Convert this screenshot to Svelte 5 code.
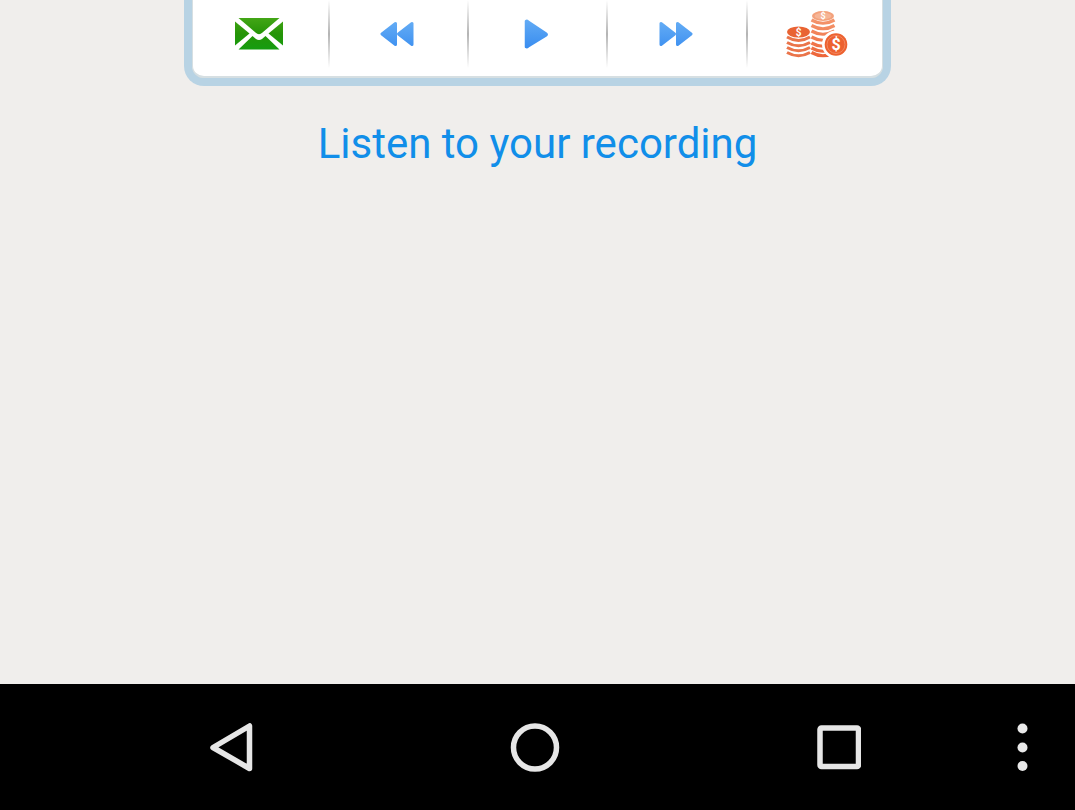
<script>
  let playing = $state(false);
</script>

<svelte:head><title>Listen to your recording</title></svelte:head>

<div class="screen">
  <main>
    <div class="panel" role="toolbar" aria-label="Recording controls">
      <div class="controls">
        <button aria-label="Send by mail">
          <svg width="50" height="34" viewBox="0 0 50 34">
            <defs>
              <linearGradient id="mail" x1="0" y1="1" x2="0" y2="33" gradientUnits="userSpaceOnUse">
                <stop offset="0" stop-color="#43a616" />
                <stop offset="0.5" stop-color="#259407" />
                <stop offset="1" stop-color="#149d10" />
              </linearGradient>
            </defs>
            <g fill="url(#mail)">
              <path d="M4.500 1H45.500L28.500 15.500Q25 19 21.500 15.500Z" />
              <path d="M1 4.500L15.500 16.500L1 28.500Z" />
              <path d="M49 4.500L34.500 16.500L49 28.500Z" />
              <path d="M4.500 32.500L18.500 19L22 22Q25 24 28 22L31.500 19L45.500 32.500Z" />
            </g>
          </svg>
        </button>
        <button aria-label="Rewind">
          <svg width="34" height="26" viewBox="0 0 34 26">
            <defs>
              <linearGradient id="blue" x1="0" y1="0" x2="0" y2="30" gradientUnits="userSpaceOnUse">
                <stop offset="0" stop-color="#65adf5" />
                <stop offset="1" stop-color="#398df0" />
              </linearGradient>
            </defs>
            <g fill="url(#blue)" stroke="url(#blue)" stroke-width="3" stroke-linejoin="round">
              <path d="M15.500 2.500V23.500L2 13Z" />
              <path d="M32 2.500V23.500L18.500 13Z" />
            </g>
          </svg>
        </button>
        <button aria-label={playing ? 'Pause' : 'Play'} onclick={() => (playing = !playing)}>
          <svg width="26" height="32" viewBox="0 0 26 32">
            <path
              d="M3 3V29Q4 29.500 5 28.500L23 17.500Q24.500 16.500 23 15.500L5 3.500Q4 2.500 3 3Z"
              fill="url(#blue)"
              stroke="url(#blue)"
              stroke-width="2.500"
              stroke-linejoin="round"
            />
          </svg>
        </button>
        <button aria-label="Fast forward">
          <svg width="34" height="26" viewBox="0 0 34 26">
            <g fill="url(#blue)" stroke="url(#blue)" stroke-width="3" stroke-linejoin="round">
              <path d="M2 2.500V23.500L15.500 13Z" />
              <path d="M18.500 2.500V23.500L32 13Z" />
            </g>
          </svg>
        </button>
        <button aria-label="Buy credits">
          <svg width="62" height="48" viewBox="0 0 62 48">
            <defs>
              <linearGradient id="tall" x1="0" y1="0" x2="0" y2="46" gradientUnits="userSpaceOnUse">
                <stop offset="0" stop-color="#f6a27a" />
                <stop offset="1" stop-color="#ed6539" />
              </linearGradient>
            </defs>
            <g fill="none" stroke="url(#tall)" stroke-width="3.200">
              <path d="M25.500 10Q37 16.500 48.500 10" />
              <path d="M25.500 15.500Q37 22 48.500 15.500" />
              <path d="M25.500 21Q37 27.500 48.500 21" />
              <path d="M25.500 27Q37 33.500 48.500 27" />
              <path d="M25.500 33Q37 39.500 48.500 33" />
              <path d="M25.500 38Q37 44.500 48.500 38" />
              <path d="M25.500 42.500Q37 49 48.500 42.500" />
            </g>
            <ellipse cx="37" cy="6" rx="11" ry="5" fill="#f3a17b" />
            <ellipse cx="37" cy="6" rx="8.500" ry="3.300" fill="#f6b596" />
            <g fill="none" stroke="#ea744a" stroke-width="3">
              <path d="M1 27Q12.500 34 24 27" />
              <path d="M1 32.500Q12.500 39 24 32.500" />
              <path d="M1 37.500Q12.500 44 24 37.500" />
              <path d="M1 42.500Q12.500 49 24 42.500" />
            </g>
            <ellipse cx="12.500" cy="22" rx="11.500" ry="5.500" fill="#e96332" />
            <circle cx="50" cy="34.500" r="14" fill="#fff" />
            <circle cx="50" cy="34.500" r="11.300" fill="#ed612f" />
            <circle cx="50" cy="34.500" r="9" fill="none" stroke="#f38861" />
            <g class="coin" text-anchor="middle">
              <text x="37" y="9" font-size="9">$</text>
              <text x="12.500" y="25.500" font-size="10">$</text>
              <text x="50" y="40" font-size="16">$</text>
            </g>
          </svg>
        </button>
      </div>
    </div>
    <a href="#recording">Listen to your recording</a>
  </main>

  <nav aria-label="System navigation">
    <button aria-label="Back">
      <svg width="44" height="52" viewBox="0 0 44 52">
        <path d="M40.500 5V47.500L4 26.500Z" fill="none" stroke="#e6e6e6" stroke-width="5.500" stroke-linejoin="round" />
      </svg>
    </button>
    <button aria-label="Home">
      <svg width="50" height="50" viewBox="0 0 50 50">
        <circle cx="25" cy="25.500" r="21.500" fill="none" stroke="#e6e6e6" stroke-width="5.500" />
      </svg>
    </button>
    <button aria-label="Recent apps">
      <svg width="44" height="46" viewBox="0 0 44 46">
        <rect x="3" y="4" width="38.500" height="38.500" rx="1.500" fill="none" stroke="#e6e6e6" stroke-width="5.500" />
      </svg>
    </button>
    <button aria-label="More options">
      <svg width="12" height="50" viewBox="0 0 12 50" fill="#e9e9e9">
        <circle cx="6.500" cy="6.500" r="5" />
        <circle cx="6.500" cy="25.500" r="5" />
        <circle cx="6.500" cy="44" r="5" />
      </svg>
    </button>
  </nav>
</div>

<style>
  :global(body) {
    margin: 0;
    background: #f0eeec;
  }

  .screen {
    display: flex;
    flex-direction: column;
    min-height: 100vh;
    font-family: Roboto, sans-serif;
  }

  main {
    flex: 1;
    display: flex;
    flex-direction: column;
    align-items: center;
    gap: 32px;
  }

  .panel {
    box-sizing: border-box;
    width: 65.8%;
    border: 8px solid #b8d3e4;
    border-top: 0;
    border-radius: 0 0 20px 20px;
    background: #d4dcdc;
  }

  .controls {
    display: grid;
    grid-template-columns: 137fr 139fr 140fr 140fr 134fr;
    padding-bottom: 8px;
    border: solid #d6dfe2;
    border-width: 0 1px 2px;
    border-radius: 0 0 12px 12px;
    background: #fff;
  }

  button {
    display: flex;
    align-items: center;
    justify-content: center;
    padding: 0;
    border: 0;
    background: none;
    cursor: pointer;
  }

  svg {
    display: block;
  }

  .controls button {
    height: 68px;
  }

  .controls button:not(:last-child) {
    padding-right: 4px;
    background: linear-gradient(transparent, #b4b4b4 50%, transparent) right / 2px 100% no-repeat;
  }

  .controls button:last-child {
    padding-left: 4px;
  }

  .coin {
    fill: #fff;
    font-family: Roboto, sans-serif;
    font-weight: 700;
  }

  a {
    color: #118ee9;
    font-size: 42px;
    line-height: 52px;
    text-align: center;
    text-decoration: none;
  }

  nav {
    display: grid;
    grid-template-columns: 304fr 304fr 304fr 62fr;
    height: 126px;
    padding: 0 22px 0 79px;
    background: #000;
  }
</style>
